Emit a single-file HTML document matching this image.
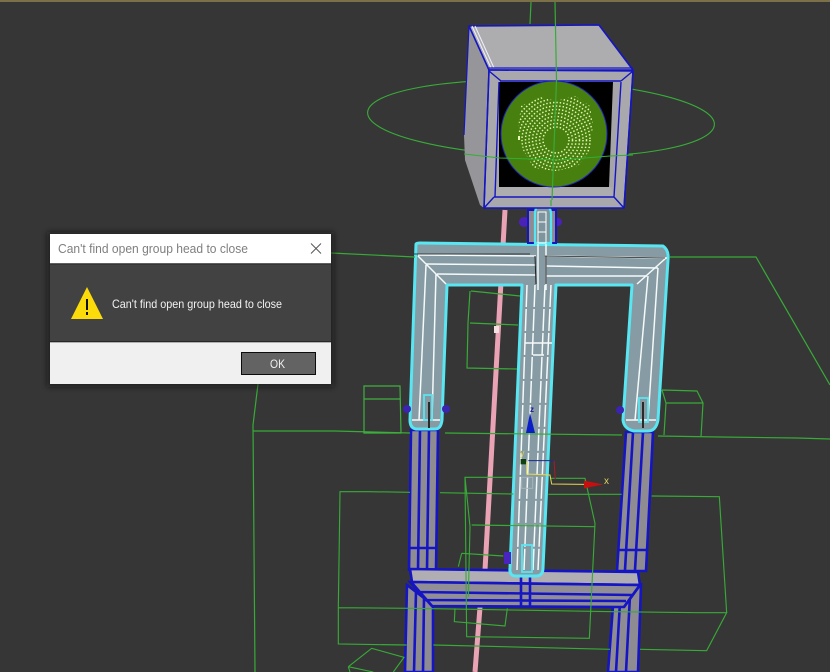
<!DOCTYPE html>
<html><head><meta charset="utf-8"><style>
html,body{margin:0;padding:0;background:#363636}
svg{display:block}
text{font-family:"Liberation Sans",sans-serif}
</style></head><body>
<svg width="830" height="672" viewBox="0 0 830 672" xmlns="http://www.w3.org/2000/svg">
<defs>
<filter id="b" x="-20%" y="-20%" width="140%" height="140%"><feGaussianBlur stdDeviation="3"/></filter>
<clipPath id="fc"><path d="M521 106 L540 97 L556 101 L575 96 L590 106 L593 125 L590 150 L578 166 L556 171 L534 168 L523 150 L518 128Z"/></clipPath>
</defs>
<rect width="830" height="672" fill="#363636"/>
<rect width="830" height="2" fill="#7b7048"/>

<!-- ellipse -->
<ellipse cx="541" cy="118.500" rx="173.500" ry="38" transform="rotate(2 541 118.500)" fill="none" stroke="#38ad38" stroke-width="1.100"/>

<!-- pink rod -->
<path d="M505 210 L485 570 L480 607 L475 672" fill="none" stroke="#e9a3b5" stroke-width="5"/>
<rect x="494" y="326" width="5" height="7" fill="#f4e0e0"/>

<!-- legs -->
<g stroke="#1515c4" stroke-width="2.600">
<path d="M411 430 L438 430 L436 570 L409 570Z" fill="#8e8c92"/>
<path d="M626 432 L653 432 L646 571 L617 571Z" fill="#8e8c92"/>
<path d="M420 430 L418 570 M429 430 L427 570 M410 548 L437 548 M633 432 L625 570 M643 432 L635 570 M618 550 L647 550" fill="none"/>
<!-- lower legs -->
<path d="M407 585 L433 605 L433 672 L405 672Z" fill="#8e8c92"/>
<path d="M613 606 L641 585 L638 672 L608 672Z" fill="#8e8c92"/>
<path d="M416 592 L414 672 M424 598 L423 672 M620 602 L616 672 M630 595 L626 672" fill="none"/>
<!-- hip -->
<path d="M410 569 L638 572 L640 585 L412 582Z" fill="#b0aeb2"/>
<path d="M410 582 L640 585 L624 607 L432 606Z" fill="#918f95"/>
<path d="M412 583 L432 606 M640 585 L624 607 M418 592 L632 595 M424 600 L626 601 M521 575 L521 606 M530 575 L530 606" fill="none"/>
</g>

<!-- arms/torso -->
<path d="M416 244 Q417 243 420 243 L663 246 Q669 250 668 260 L658 420 Q656 431 648 431 L634 431 Q624 429 623 420 L632 285 L556 285 L543 568 Q543 576 536 576 L516 576 Q509 576 510 568 L522 285 L447 285 L442 420 Q441 429 435 429 L416 429 Q410 428 410 420Z" fill="#869ba3" stroke="#58e6f2" stroke-width="3" stroke-linejoin="round"/>
<g fill="none" stroke="#f5fafa" stroke-width="1.500">
<path d="M418 255 L536 256 M544 256 L667 258 M426 264 L536 265 M546 266 L658 268 M437 274 L536 275 M546 276 L647 276"/>
<path d="M418 256 L446 284 M666 258 L637 284"/>
<path d="M426 265 L419 420 M436 274 L432 420 M658 268 L648 420 M648 276 L635 420"/>
<path d="M412 420 L440 420 M626 420 L656 420"/>
<path d="M527 285 L517 570 M535 285 L524 570 M545 285 L533 570 M551 285 L538 570" stroke-dasharray="22 2"/>
<path d="M525 343 L552 343 M533 355 L544 355 M538 225 L538 290 M546 225 L546 290"/>
</g>
<path d="M535 256 L536 284 M546 256 L546 284" stroke="#222" stroke-width="1" fill="none"/>
<path d="M414 254 L530 254 M544 256 L665 258" stroke="#1a1a1a" stroke-width=".8" fill="none"/>
<g fill="none" stroke="#58e6f2" stroke-width="1.800">
<path d="M424 395 L424 420 L432 420 L432 395Z M639 398 L639 422 L648 422 L648 398Z M522 545 L522 572 L532 572 L532 545Z"/>
</g>
<rect x="428" y="402" width="2" height="26" fill="#2a2a2a"/>
<rect x="642" y="402" width="2" height="26" fill="#2a2a2a"/>
<circle cx="407" cy="409" r="4" fill="#3b24b0"/><circle cx="446" cy="409" r="4" fill="#3b24b0"/>
<circle cx="620" cy="410" r="4" fill="#3b24b0"/>
<rect x="504" y="552" width="7" height="12" fill="#4a24c0"/>

<!-- neck -->
<circle cx="524" cy="222" r="5" fill="#4b22b8"/><circle cx="558" cy="222" r="4" fill="#4b22b8"/>
<path d="M528 210 L556 210 L556 243 L528 243Z" fill="#8e8c92" stroke="#1515c4" stroke-width="2"/>
<path d="M535 214 Q535 205 542 205 Q551 205 551 214 L551 243 L535 243Z" fill="#7f959d" stroke="#58e6f2" stroke-width="2.200"/>
<path d="M538 212 L546 212 L546 243 L538 243Z M538 222 L546 222 M538 232 L546 232" fill="none" stroke="#fff" stroke-width="1"/>

<!-- head -->
<path d="M469 26 L489 70 L484 208 L480 205 L465 160 L464 135Z" fill="#96969a"/>
<path d="M469 26 L464 135" stroke="#1515c4" stroke-width="1.200" fill="none"/>
<g stroke="#1515c4" stroke-width="1.600" stroke-linejoin="round">
<path d="M469 26 L599 25 L633 70 L489 70Z" fill="#adadb0"/>
<path d="M472 26 L491 68 M475 26 L494 68" stroke="#f0f0ff" stroke-width="1"/>
<path d="M489 70 L633 71 L624 208 L484 208Z" fill="#a9a9ad"/>
</g>
<rect x="499" y="82" width="114" height="105" fill="#000"/>
<path d="M613 82 L621 82 L616 187 L609 187Z" fill="#a4a4a9"/>
<path d="M498 187 L610 187 L615 197 L494 197Z" fill="#adadb0"/>
<path d="M489 71 L501 81 M633 71 L621 81 M484 208 L494 197 M624 208 L614 197 M494 197 L614 197 M500 81 L621 81 M499 82 L495 197 M621 82 L614 197 M489 70 L484 208 M633 71 L624 208" stroke="#1515c4" stroke-width="1.400" fill="none"/>
<path d="M489 68 L633 68" stroke="#1515c4" stroke-width="1.200"/>
<circle cx="554" cy="134" r="53" fill="#47800f" stroke="#2026c0" stroke-width="1"/>
<g clip-path="url(#fc)" fill="none" stroke="#e6f8b4" stroke-width="1.500" stroke-dasharray="1.400 2">
<circle cx="556" cy="140" r="13"/><circle cx="556" cy="140" r="16.500"/><circle cx="556" cy="140" r="20"/><circle cx="556" cy="140" r="23.500"/><circle cx="556" cy="140" r="27"/><circle cx="556" cy="140" r="30.500"/><circle cx="556" cy="140" r="34"/><circle cx="556" cy="140" r="37.500"/><circle cx="556" cy="140" r="41"/><circle cx="556" cy="140" r="44.500"/><circle cx="556" cy="140" r="48"/>
</g>
<rect x="518" y="136" width="2" height="4" fill="#e6f8b4"/>
<!-- front arc of ellipse over head -->
<path d="M464 154 L500 158 L560 160 L610 156 L633 155" fill="none" stroke="#30b030" stroke-width="1"/>

<!-- green lines -->
<g fill="none" stroke="#38aa38" stroke-width="1.200">
<path d="M531 2 L530 24 M555 2 L556.500 80 L552 200 M551 200 L551 206"/>
<path d="M331 253 L415 257 M670 257 L756 257 L830 385"/>
<path d="M258 384 L253 425 L255 672"/>
<path d="M253 431 L335 431 L410 433 M658 436 L720 437 L797 438 L830 439 M445 433 L622 435"/>
<path d="M364 386 L400 386 L401 433 L364 433Z M364 399 L400 399" stroke="#40b040"/>
<path d="M662 390 L697 391 L703 403 L701 437 M666 403 L703 403 M666 403 L664 435 M662 390 L666 403"/>
<path d="M471 291 L520 296 M470 291 L468 323 L467 368 L517 369 M470 323 L518 325"/>
<g transform="translate(330 440) scale(.33333)" stroke-width="3.400">
<path d="M240 157 L115 155 L30 155 L25 500 L25 612 L230 615 M25 503 L240 505 L850 515 L1105 518 L1190 518 L1130 632 L930 628 M310 615 L840 628"/>
<path d="M330 158 L550 162 M655 163 L875 163 M965 168 L1168 170 L1190 518"/>
<path d="M660 115 L765 115 L795 250 L778 595 L410 590 L405 112 L548 112 M425 255 L795 260 M405 112 L420 260 L415 470"/>
<path d="M375 505 L373 545 L525 558 L532 505 M395 340 L385 380 M395 340 L520 348"/>
<path d="M55 680 L125 625 L222 652 L190 696 M55 680 L130 696 M55 680 L60 696"/>
</g>
</g>

<!-- gizmo -->
<g transform="translate(330 440) scale(.33333)" fill="none" stroke-width="3">
<path d="M590 65 L590 102 L660 105 L665 132 L765 133" stroke="#e6d850"/>
<path d="M595 62 L672 62 L676 118" stroke="#1c2a90"/><path d="M672 62 L676 118" stroke="#a82020"/>
<rect x="575" y="112" width="33" height="33" stroke="#a8b4ba"/>
<path d="M762 122 L820 133 L762 145Z" fill="#c80f0f" stroke="none"/>
<rect x="572" y="57" width="16" height="16" fill="#104010" stroke="none"/>
</g>
<path d="M530 413 L526 433 L535 433Z" fill="#0a1ec8"/>
<text x="530" y="412" font-size="8" font-weight="bold" fill="#1c1c9c" stroke="none">z</text>
<text x="520" y="456" font-size="9" fill="#d8cf55">y</text>
<text x="604" y="484" font-size="10" fill="#e0d060">x</text>

<!-- dialog -->
<rect x="47" y="232" width="287" height="155" fill="#111" opacity=".55" filter="url(#b)"/>
<rect x="50" y="234" width="281" height="30" fill="#fff"/>
<rect x="50" y="264" width="281" height="78" fill="#424242"/>
<rect x="50" y="342" width="281" height="42" fill="#f0f0f0"/>
<rect x="50" y="263.300" width="281" height="1" fill="#1c1c1c"/>
<rect x="50" y="341.300" width="281" height="1" fill="#1c1c1c"/>
<text x="58" y="253" font-size="13" fill="#7f7f7f" textLength="190" lengthAdjust="spacingAndGlyphs">Can't find open group head to close</text>
<path d="M311 243.500 L321 253.500 M321 243.500 L311 253.500" stroke="#555" stroke-width="1" fill="none"/>
<path d="M87 287 L103 319 L71 319Z" fill="#fbdc0a"/>
<rect x="86" y="299" width="2" height="11" fill="#111"/><rect x="86" y="312" width="2" height="3" fill="#111"/>
<text x="112" y="308" font-size="12" fill="#f2f2f2" textLength="170" lengthAdjust="spacingAndGlyphs">Can't find open group head to close</text>
<rect x="241.500" y="352.500" width="74" height="22" fill="#636363" stroke="#0c0c0c" stroke-width="1"/>
<text x="270" y="368" font-size="12" fill="#f0f0f0" textLength="15" lengthAdjust="spacingAndGlyphs">OK</text>
</svg>
</body></html>
